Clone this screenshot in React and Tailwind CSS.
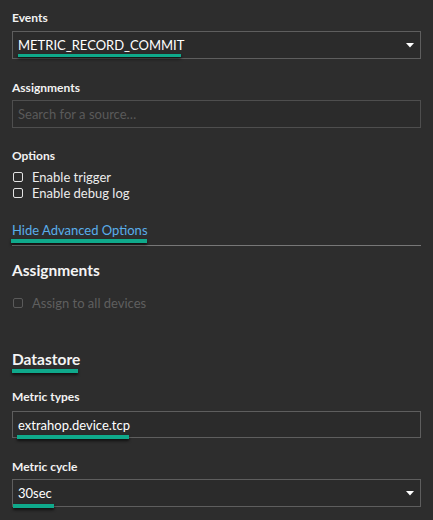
import React from "react";

const font = { fontFamily: "Lato, 'Noto Sans', sans-serif" };

function Mark({ className }) {
  return (
    <span
      className={
        "absolute bg-[#0fa98b] shadow-[0_2px_3px_rgba(0,0,0,0.65)] " + className
      }
    />
  );
}

function Caret() {
  return (
    <svg width="8" height="5" viewBox="0 0 8 5" className="shrink-0">
      <path d="M0 0 H8 L4 4.5 Z" fill="#ffffff" />
    </svg>
  );
}

function Checkbox({ label, disabled }) {
  return (
    <div className="flex items-center h-4 pl-[1px]">
      <span
        className={
          "w-[10px] h-[10px] rounded-[2px] border " +
          (disabled ? "border-[#5a5a5a]" : "border-[#e4e4e4]")
        }
      />
      <span
        className={
          "ml-[9px] text-[13px] leading-4 " +
          (disabled ? "text-[#5f5f5f]" : "text-[#ececec]")
        }
      >
        {label}
      </span>
    </div>
  );
}

export default function App() {
  return (
    <div
      style={font}
      className="w-[433px] h-[520px] overflow-hidden bg-[#2d2d2d] px-3 pt-[10px] text-white"
    >
      {/* Events */}
      <div className="text-[12px] font-bold leading-4 text-[#f2f2f2]">Events</div>
      <div className="mt-[5px] h-[28px] border border-[#5e5e5e] bg-[#2b2b2b] flex items-center justify-between pl-[5px] pr-[6px]">
        <span className="relative inline-block text-[13px] leading-[18px] text-white">
          METRIC_RECORD_COMMIT
          <Mark className="left-0 top-full w-[163px] h-[3px]" />
        </span>
        <Caret />
      </div>

      {/* Assignments */}
      <div className="mt-[21px] text-[12px] font-bold leading-4 text-[#f2f2f2]">Assignments</div>
      <div className="mt-[4px] h-[28px] border border-[#4e4e4e] bg-[#2b2b2b] flex items-center pl-[5px]">
        <span className="text-[13px] leading-[18px] text-[#5a5a5a]">Search for a source…</span>
      </div>

      {/* Options */}
      <div className="mt-[20px] text-[12px] font-bold leading-4 text-[#f2f2f2]">Options</div>
      <div className="mt-[5px] flex flex-col">
        <Checkbox label="Enable trigger" />
        <Checkbox label="Enable debug log" />
      </div>

      {/* Hide advanced */}
      <div className="mt-[20px] pb-[6px] border-b border-[#777777] flex">
        <span className="relative block text-[13px] leading-[18px] text-[#5aaeea]">
          Hide Advanced Options
          <Mark className="-left-[1px] top-full w-[136px] h-[4px]" />
        </span>
      </div>

      {/* Assignments heading */}
      <div className="mt-[14px] text-[15.5px] font-bold leading-5 text-[#f4f4f4]">Assignments</div>
      <div className="mt-[15px]">
        <Checkbox label="Assign to all devices" disabled />
      </div>

      {/* Datastore */}
      <div className="mt-[38px] flex">
        <span className="relative block text-[15.5px] font-bold leading-5 text-[#f4f4f4]">
          Datastore
          <Mark className="left-0 top-full w-[66px] h-[4px]" />
        </span>
      </div>

      <div className="mt-[20px] text-[12px] font-bold leading-4 text-[#f2f2f2]">Metric types</div>
      <div className="mt-[6px] h-[27px] border border-[#5e5e5e] bg-[#2b2b2b] flex items-center pl-[5px]">
        <span className="relative inline-block text-[13px] leading-[18px] text-white">
          extrahop.device.tcp
          <Mark className="-left-[1px] top-[calc(100%+1.5px)] w-[112px] h-[4px]" />
        </span>
      </div>

      <div className="mt-[21px] text-[12px] font-bold leading-4 text-[#f2f2f2]">Metric cycle</div>
      <div className="mt-[4px] h-[28px] border border-[#5e5e5e] bg-[#2b2b2b] flex items-center justify-between pl-[5px] pr-[6px]">
        <span className="relative inline-block text-[13px] leading-[18px] text-white">
          30sec
          <Mark className="-left-[5px] top-[calc(100%+2px)] w-[41px] h-[4px] z-10" />
        </span>
        <Caret />
      </div>
    </div>
  );
}
